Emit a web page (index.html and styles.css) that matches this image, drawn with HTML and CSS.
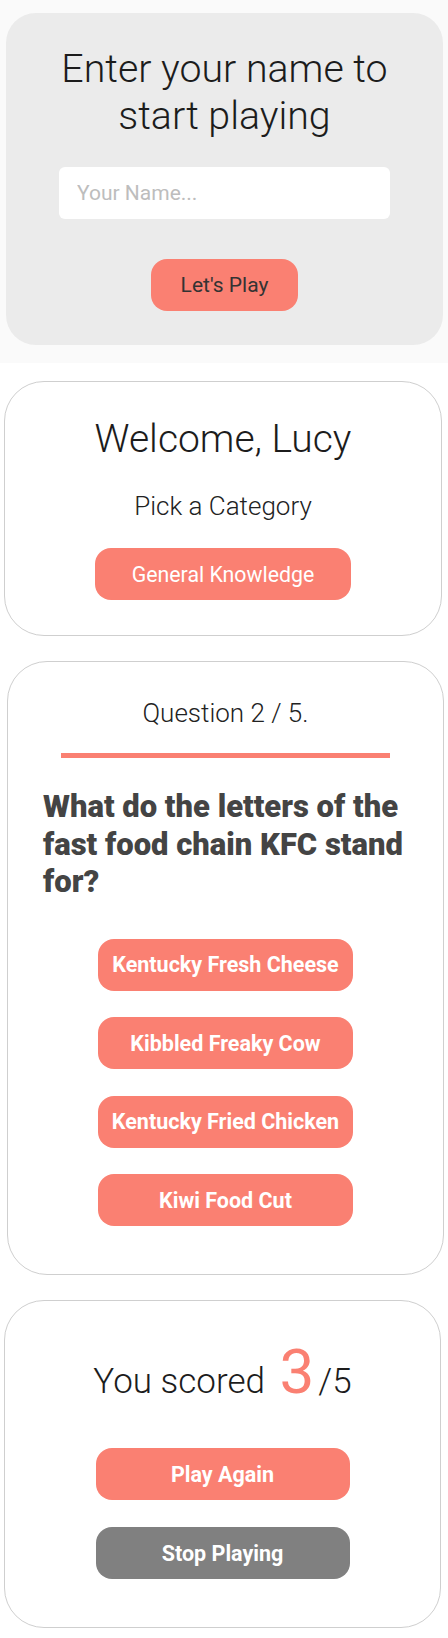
FILE: index.html
```html
<!DOCTYPE html>
<html lang="en">
<head>
<meta charset="utf-8">
<title>Quiz</title>
<link rel="stylesheet" href="styles.css">
</head>
<body>
<section class="start-screen">
  <div class="start-card">
    <h1 class="title title-start">Enter your name to start playing</h1>
    <input class="name-input" type="text" placeholder="Your Name...">
    <button class="btn btn-play">Let's Play</button>
  </div>
</section>

<div class="stack">
  <section class="card card-welcome">
    <h2 class="title title-welcome">Welcome, Lucy</h2>
    <p class="subtitle">Pick a Category</p>
    <button class="btn btn-category">General Knowledge</button>
  </section>

  <section class="card card-question">
    <p class="subtitle">Question 2 / 5.</p>
    <div class="rule"></div>
    <h3 class="question">What do the letters of the fast food chain KFC stand for?</h3>
    <div class="answers">
      <button class="btn btn-answer">Kentucky Fresh Cheese</button>
      <button class="btn btn-answer">Kibbled Freaky Cow</button>
      <button class="btn btn-answer">Kentucky Fried Chicken</button>
      <button class="btn btn-answer">Kiwi Food Cut</button>
    </div>
  </section>

  <section class="card card-score">
    <h2 class="score">You scored <span class="score-num">3</span>/5</h2>
    <div class="answers">
      <button class="btn btn-answer btn-wide">Play Again</button>
      <button class="btn btn-answer btn-wide btn-grey">Stop Playing</button>
    </div>
  </section>
</div>
</body>
</html>
```
FILE: styles.css
```css
* { box-sizing: border-box; }
html, body { margin: 0; padding: 0; }
body {
  background: #ffffff;
  font-family: Roboto, "Noto Sans", sans-serif;
  color: #222;
  width: 448px;
}
.start-screen {
  background: #fafafa;
  padding: 13px 5px 18px 6px;
}
.start-card {
  background: #ebebeb;
  border-radius: 30px;
  padding: 33px 0 34px;
  display: flex;
  flex-direction: column;
  align-items: center;
}
.title {
  margin: 0;
  font-size: 38px;
  font-weight: 300;
  line-height: 47px;
  text-align: center;
  color: #1c1c1c;
}
.title-start { max-width: 355px; font-size: 39.3px; }
.title-welcome { font-size: 39px; }
.name-input {
  margin-top: 27px;
  width: 331px;
  height: 52px;
  border: none;
  border-radius: 6px;
  background: #fff;
  padding: 0 18px;
  font-family: Roboto, sans-serif;
  font-size: 21px;
  font-weight: 400;
  outline: none;
}
.name-input::placeholder { color: #bdbdbd; }
.btn {
  border: none;
  font-family: Roboto, sans-serif;
  background: #fa8072;
  border-radius: 16px;
  height: 52px;
  padding: 0;
  cursor: pointer;
}
.btn-play {
  margin-top: 40px;
  width: 147px;
  font-size: 21px;
  color: #333;
  font-weight: 400;
}
.stack {
  display: flex;
  flex-direction: column;
  gap: 25px;
  padding-top: 18px;
}
.card {
  border: 1px solid #cfcfcf;
  border-radius: 40px;
  background: #fff;
  display: flex;
  flex-direction: column;
  align-items: center;
}
.card-welcome {
  margin-left: 4px;
  width: 438px;
  padding: 34px 0 35px;
}
.subtitle {
  margin: 0;
  font-size: 26px;
  font-weight: 300;
  line-height: 30px;
  color: #222;
}
.card-welcome .subtitle { margin-top: 28px; }
.btn-category {
  margin-top: 27px;
  width: 256px;
  color: #fff;
  font-size: 21.3px;
  font-weight: 400;
}
.card-question {
  margin-left: 7px;
  width: 437px;
  padding: 36px 0 48px;
}
.rule {
  margin-top: 25px;
  width: 329px;
  height: 5px;
  background: #fa8072;
}
.question {
  align-self: flex-start;
  margin: 30px 0 0 35px;
  width: 372px;
  font-size: 31px;
  font-weight: 900;
  line-height: 37.5px;
  color: #444;
}
.answers {
  display: flex;
  flex-direction: column;
  align-items: center;
  gap: 26.5px;
}
.card-question .answers { margin-top: 38px; }
.btn-answer {
  width: 255px;
  color: #fff;
  font-size: 21.5px;
  font-weight: 700;
}
.card-score {
  margin-left: 4px;
  width: 437px;
  padding: 34px 0 48px;
}
.score {
  margin: 0;
  font-size: 35px;
  font-weight: 300;
  color: #1c1c1c;
}
.score-num {
  font-size: 62px;
  font-weight: 400;
  color: #fa8072;
  margin: 0 4px 0 6px;
}
.card-score .answers { margin-top: 40px; gap: 27px; }
.btn-wide { width: 254px; }
.btn-grey { background: #808080; }
```
